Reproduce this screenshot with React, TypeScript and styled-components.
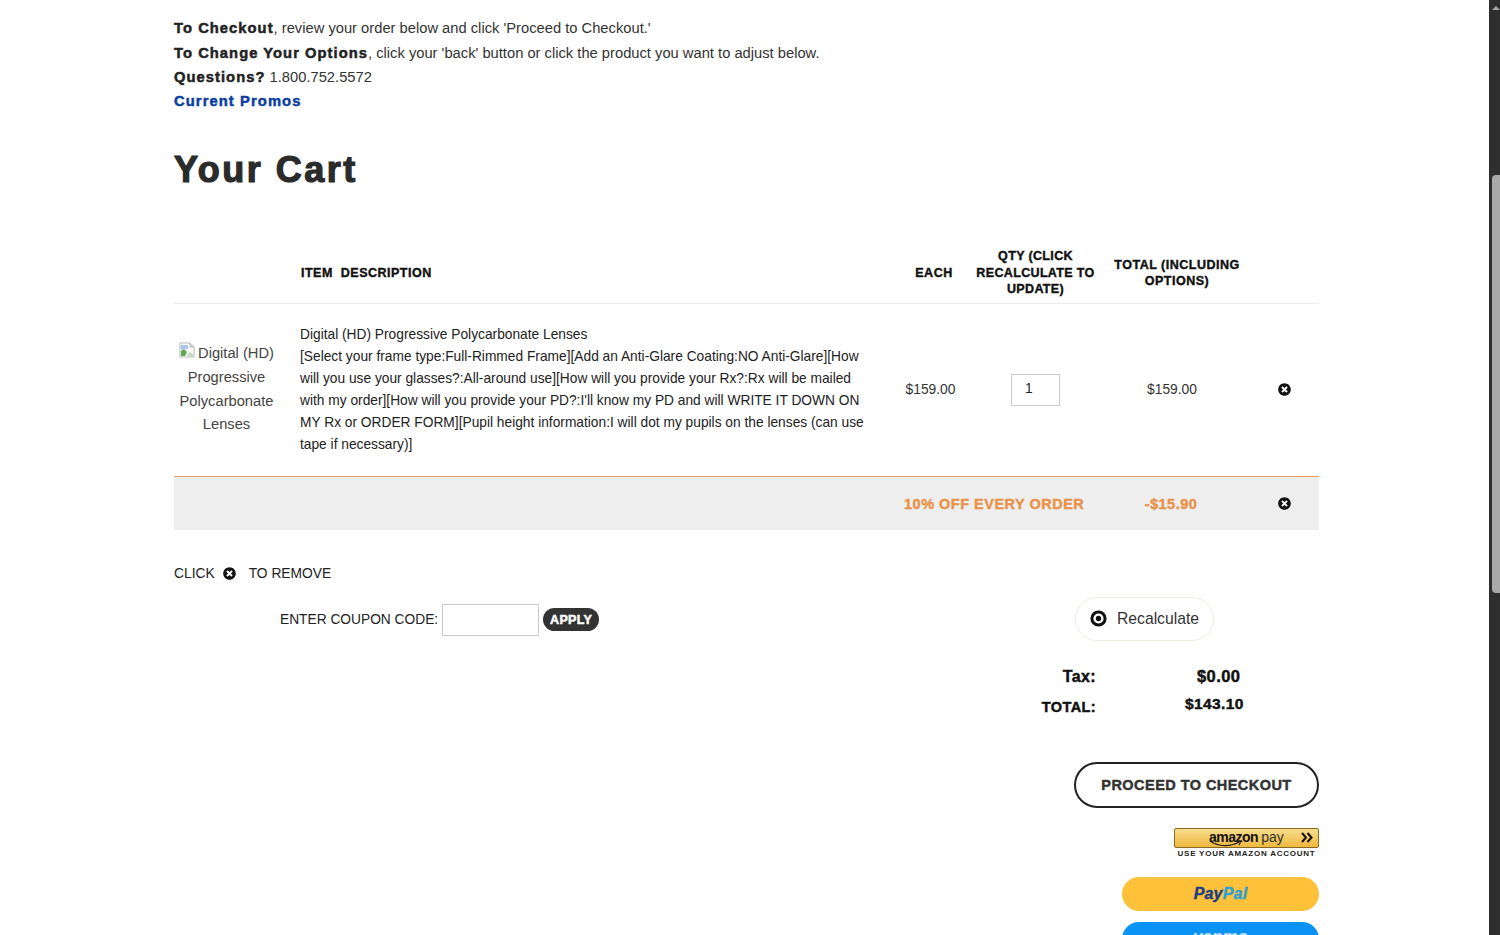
import React from "react";
import styled, { createGlobalStyle } from "styled-components";
import { FaTimesCircle } from "react-icons/fa";

const Global = createGlobalStyle`
  html, body { margin: 0; padding: 0; height: 100%; overflow: hidden; background: #fff; }
  #root { height: 100%; }
  * { box-sizing: border-box; }
`;

const Shell = styled.div`
  display: flex;
  height: 935px;
  overflow: hidden;
  font-family: "Liberation Sans", Arial, sans-serif;
  color: #333;
`;
const Main = styled.main`
  flex: 1;
  min-width: 0;
  padding: 16.4px 170px 0 174px;
`;
const Rail = styled.div`
  width: 11px;
  background: #2e2e2e;
  padding-top: 175px;
  position: relative;
`;
const RailArrow = styled.span`
  position: absolute;
  top: 6px;
  left: 3px;
  border-left: 4px solid transparent;
  border-right: 4px solid transparent;
  border-bottom: 4px solid #a8a8a8;
`;
const Thumb = styled.div`
  height: 418px;
  margin-left: 3px;
  background: #a8a8a8;
  border-radius: 4px 0 0 4px;
`;
const Intro = styled.div`
  font-size: 14.72px;
  line-height: 24.3px;
  color: #333;
`;
const Heavy = styled.b`
  font-weight: 700;
  color: #222;
  letter-spacing: 1.05px;
  -webkit-text-stroke: 0.5px currentColor;
`;
const PromoLink = styled.a`
  display: block;
  font-weight: 700;
  color: #0b3f9e;
  letter-spacing: 1.1px;
  -webkit-text-stroke: 0.5px currentColor;
`;
const Title = styled.h1`
  margin: 34px 0 0;
  font-size: 36px;
  line-height: 44px;
  font-weight: 700;
  color: #2b2b2b;
  letter-spacing: 2.5px;
  -webkit-text-stroke: 1.2px currentColor;
`;
const columns = "126px 590px 86px 119px 154px 70px";
const HeadRow = styled.div`
  margin-top: 46px;
  display: grid;
  grid-template-columns: ${columns};
  align-items: center;
  height: 66px;
  padding-top: 6px;
  border-bottom: 1px solid #eee;
`;
const HeadCell = styled.div<{ $align?: string }>`
  font-size: 12.5px;
  line-height: 16.5px;
  font-weight: 700;
  color: #111;
  letter-spacing: 0.5px;
  -webkit-text-stroke: 0.4px currentColor;
  text-align: ${(p) => p.$align || "center"};
  white-space: pre-wrap;
`;
const DescHead = styled(HeadCell)`
  padding-left: 1px;
`;
const EachHead = styled(HeadCell)`
  padding-left: 2px;
`;
const QtyHead = styled(HeadCell)`
  margin: 0 -5px;
  letter-spacing: 0.35px;
`;
const TotalHead = styled(HeadCell)`
  padding-left: 10px;
`;
const ItemRow = styled.div`
  display: grid;
  grid-template-columns: ${columns};
  align-items: center;
  height: 173px;
  border-bottom: 1px solid #e79a5c;
`;
const ImageAlt = styled.div`
  width: 105px;
  font-size: 14.7px;
  line-height: 23.6px;
  color: #444;
  text-align: center;
`;
const BrokenIcon = styled.svg`
  width: 16px;
  height: 16px;
  vertical-align: 0;
  margin-right: 3px;
`;
const Description = styled.div`
  width: 572px;
  padding-top: 1px;
  font-size: 13.75px;
  line-height: 22.1px;
  color: #222;
`;
const PriceCell = styled.div<{ $shift?: number }>`
  font-size: 13.8px;
  line-height: 18px;
  padding-top: 1px;
  color: #333;
  text-align: center;
  padding-right: ${(p) => p.$shift || 0}px;
`;
const QtyBox = styled.input`
  display: block;
  margin: 0 auto;
  width: 49px;
  height: 32px;
  border: 1px solid #ccc;
  padding: 0 0 3px 13px;
  font: 13.8px "Liberation Sans", Arial, sans-serif;
  color: #222;
`;
const RemoveCell = styled.div`
  display: flex;
  justify-content: center;
  color: #111;
  font-size: 13px;
  line-height: 0;
`;
const PromoRow = styled.div`
  display: grid;
  grid-template-columns: 730px 195px 144px 76px;
  align-items: center;
  height: 53px;
  padding-top: 1px;
  background: #eee;
`;
const PromoRemove = styled(RemoveCell)`
  padding-left: 6px;
`;
const PromoText = styled.div<{ $align?: string }>`
  color: #e8924a;
  font-size: 14.5px;
  font-weight: 700;
  letter-spacing: 0.5px;
  -webkit-text-stroke: 0.4px currentColor;
  text-align: ${(p) => p.$align || "left"};
`;
const RemoveHint = styled.div`
  margin-top: 35px;
  height: 18px;
  display: flex;
  align-items: center;
  font-size: 13.8px;
  color: #222;
  gap: 8px;
  line-height: 18px;
`;
const HintIcon = styled.span`
  display: inline-flex;
  font-size: 13px;
  margin-right: 5px;
  color: #111;
`;
const Lower = styled.div`
  margin-top: 14px;
  display: flex;
  justify-content: space-between;
  align-items: flex-start;
`;
const CouponForm = styled.div`
  margin: 7px 0 0 106px;
  display: flex;
  align-items: center;
  gap: 4px;
  font-size: 13.75px;
  color: #222;
`;
const CouponInput = styled.input`
  width: 97px;
  height: 32px;
  border: 1px solid #ccc;
`;
const ApplyButton = styled.button`
  width: 56px;
  height: 23px;
  border: 0;
  padding: 0;
  border-radius: 12px;
  background: #333;
  color: #fff;
  font: 700 12.5px "Liberation Sans", Arial, sans-serif;
  letter-spacing: 0.35px;
  -webkit-text-stroke: 0.5px currentColor;
`;
const Summary = styled.div`
  width: 244px;
  display: flex;
  flex-direction: column;
  align-items: flex-end;
`;
const RecalcButton = styled.button`
  align-self: flex-start;
  width: 139px;
  height: 44px;
  display: flex;
  align-items: center;
  justify-content: center;
  gap: 10px;
  border: 1px solid #efeee4;
  border-radius: 22px;
  background: #fff;
  font: 15.7px "Liberation Sans", Arial, sans-serif;
  color: #333;
  padding: 0;
`;
const RecalcIcon = styled.svg`
  width: 17px;
  height: 17px;
`;
const Totals = styled.div`
  margin: 20px 0 0 -40px;
  width: 284px;
  height: 62px;
  display: grid;
  grid-template-columns: 61px 1fr;
  grid-template-rows: 31px 31px;
`;
const TotalLabel = styled.div<{ $size: number }>`
  text-align: right;
  color: #111;
  font-size: ${(p) => p.$size}px;
  line-height: 31px;
  font-weight: 700;
  white-space: nowrap;
  letter-spacing: 0.4px;
  -webkit-text-stroke: 0.45px currentColor;
`;
const TotalValue = styled(TotalLabel)<{ $pad: number; $lift?: number }>`
  padding-left: ${(p) => p.$pad}px;
  text-align: left;
  line-height: ${(p) => 31 - (p.$lift || 0) * 2}px;
`;
const CheckoutButton = styled.button`
  margin-top: 39px;
  width: 245px;
  height: 46px;
  flex: none;
  border: 2px solid #222;
  border-radius: 23px;
  background: #fff;
  color: #333;
  padding: 0;
  font: 700 14.5px "Liberation Sans", Arial, sans-serif;
  letter-spacing: 0.45px;
  -webkit-text-stroke: 0.45px currentColor;
`;
const AmazonBlock = styled.div`
  margin-top: 20px;
  width: 145px;
`;
const AmazonButton = styled.div`
  height: 20px;
  border: 1px solid #8a6a20;
  border-radius: 2px;
  background: linear-gradient(#f8dc8d, #eeb93e);
  display: flex;
  align-items: center;
  justify-content: flex-end;
  padding-right: 5px;
  position: relative;
  color: #111;
`;
const AmazonWord = styled.span`
  position: absolute;
  left: 34px;
  top: 0;
  font-size: 14px;
  line-height: 16px;
  font-weight: 700;
  letter-spacing: -0.5px;
`;
const AmazonPayWord = styled.span`
  font-weight: 400;
  letter-spacing: 0;
  margin-left: 3px;
  color: #333;
`;
const AmazonSmile = styled.svg`
  position: absolute;
  left: 34px;
  top: 11px;
  width: 36px;
  height: 8px;
`;
const AmazonArrows = styled.svg`
  width: 12px;
  height: 11px;
`;
const AmazonCaption = styled.div`
  font-size: 8px;
  line-height: 10px;
  margin-top: 1px;
  font-weight: 700;
  color: #222;
  letter-spacing: 0.75px;
  text-align: center;
  white-space: nowrap;
`;
const WalletButton = styled.div<{ $bg: string; $mt: number }>`
  margin-top: ${(p) => p.$mt}px;
  width: 197px;
  height: 34px;
  flex: none;
  border-radius: 17px;
  background: ${(p) => p.$bg};
  display: flex;
  align-items: center;
  justify-content: center;
`;
const PayPalWord = styled.span`
  font: italic 700 16px "Liberation Sans", Arial, sans-serif;
  color: #1b3d82;
  letter-spacing: 0.2px;
  -webkit-text-stroke: 0.4px currentColor;
`;
const PalPart = styled.span`
  color: #2aa0d8;
`;
const VenmoWord = styled.span`
  font: italic 700 17px "Liberation Sans", Arial, sans-serif;
  color: #fff;
  opacity: 0.75;
  margin-bottom: 3px;
`;

const Broken = () => (
  <BrokenIcon viewBox="0 0 16 16">
    <path d="M1 1h10l4 4v10H1z" fill="#fff" stroke="#b5b5b5" />
    <path d="M11 1v4h4" fill="#ddd" stroke="#b5b5b5" />
    <path d="M2 14V9l3-2 3 3-2 4z" fill="#5fa84f" />
    <path d="M2 3h7v4H5L2 8z" fill="#a8c4ee" />
    <path d="M8 14l2-4 4 2v2z" fill="#c8d8c0" />
  </BrokenIcon>
);

export default function App() {
  return (
    <Shell>
      <Global />
      <Main>
        <Intro>
          <div><Heavy>To Checkout</Heavy>, review your order below and click 'Proceed to Checkout.'</div>
          <div><Heavy>To Change Your Options</Heavy>, click your 'back' button or click the product you want to adjust below.</div>
          <div><Heavy>Questions?</Heavy> 1.800.752.5572</div>
          <PromoLink>Current Promos</PromoLink>
        </Intro>
        <Title>Your Cart</Title>
        <HeadRow>
          <span />
          <DescHead $align="left">{"ITEM  DESCRIPTION"}</DescHead>
          <EachHead>EACH</EachHead>
          <QtyHead>QTY (CLICK RECALCULATE TO UPDATE)</QtyHead>
          <TotalHead>TOTAL (INCLUDING OPTIONS)</TotalHead>
          <span />
        </HeadRow>
        <ItemRow>
          <ImageAlt><Broken />Digital (HD) Progressive Polycarbonate Lenses</ImageAlt>
          <Description>
            Digital (HD) Progressive Polycarbonate Lenses<br />
            [Select your frame type:Full-Rimmed Frame][Add an Anti-Glare Coating:NO Anti-Glare][How will you use your glasses?:All-around use][How will you provide your Rx?:Rx will be mailed with my order][How will you provide your PD?:I'll know my PD and will WRITE IT DOWN ON MY Rx or ORDER FORM][Pupil height information:I will dot my pupils on the lenses (can use tape if necessary)]
          </Description>
          <PriceCell $shift={5}>$159.00</PriceCell>
          <QtyBox defaultValue="1" />
          <PriceCell>$159.00</PriceCell>
          <RemoveCell><FaTimesCircle /></RemoveCell>
        </ItemRow>
        <PromoRow>
          <span />
          <PromoText>10% OFF EVERY ORDER</PromoText>
          <PromoText $align="center">-$15.90</PromoText>
          <PromoRemove><FaTimesCircle /></PromoRemove>
        </PromoRow>
        <RemoveHint>
          CLICK <HintIcon><FaTimesCircle /></HintIcon> TO REMOVE
        </RemoveHint>
        <Lower>
          <CouponForm>
            ENTER COUPON CODE:
            <CouponInput />
            <ApplyButton>APPLY</ApplyButton>
          </CouponForm>
          <Summary>
            <RecalcButton>
              <RecalcIcon viewBox="0 0 17 17">
                <circle cx="8.5" cy="8.5" r="6.6" fill="none" stroke="#111" strokeWidth="3" />
                <circle cx="8.5" cy="8.5" r="2.7" fill="#111" />
              </RecalcIcon>
              Recalculate
            </RecalcButton>
            <Totals>
              <TotalLabel $size={16}>Tax:</TotalLabel>
              <TotalValue $size={16.5} $pad={101}>$0.00</TotalValue>
              <TotalLabel $size={14.5}>TOTAL:</TotalLabel>
              <TotalValue $size={15.5} $pad={89} $lift={4}>$143.10</TotalValue>
            </Totals>
            <CheckoutButton>PROCEED TO CHECKOUT</CheckoutButton>
            <AmazonBlock>
              <AmazonButton>
                <AmazonWord>amazon<AmazonPayWord>pay</AmazonPayWord></AmazonWord>
                <AmazonSmile viewBox="0 0 36 8">
                  <path d="M1 1c9 6 20 6 29 1" fill="none" stroke="#222" strokeWidth="1.4" />
                  <path d="M27 1l5 0-2 4" fill="none" stroke="#222" strokeWidth="1.2" />
                </AmazonSmile>
                <AmazonArrows viewBox="0 0 12 11">
                  <path d="M1 1l4 4.5-4 4.5M6.5 1l4 4.5-4 4.5" fill="none" stroke="#111" strokeWidth="2" />
                </AmazonArrows>
              </AmazonButton>
              <AmazonCaption>USE YOUR AMAZON ACCOUNT</AmazonCaption>
            </AmazonBlock>
            <WalletButton $bg="#ffc03a" $mt={18}>
              <PayPalWord>Pay<PalPart>Pal</PalPart></PayPalWord>
            </WalletButton>
            <WalletButton $bg="#0a93f5" $mt={11}>
              <VenmoWord>venmo</VenmoWord>
            </WalletButton>
          </Summary>
        </Lower>
      </Main>
      <Rail>
        <RailArrow />
        <Thumb />
      </Rail>
    </Shell>
  );
}
